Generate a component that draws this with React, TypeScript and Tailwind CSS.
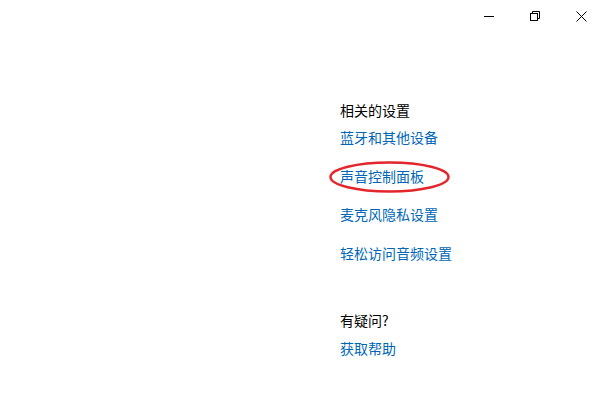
import React from "react";

const font = { fontFamily: '"Noto Sans CJK SC", "Noto Sans", sans-serif' };

export default function App() {
  return (
    <div className="w-[604px] h-[407px] bg-white relative overflow-hidden" style={font}>
      <div className="flex justify-end h-[32px]">
        <div className="w-[46px] h-[32px] flex items-center justify-center">
          <svg width="10" height="10" viewBox="0 0 10 10">
            <line x1="0" y1="5.5" x2="10" y2="5.5" stroke="#000" strokeWidth="1" />
          </svg>
        </div>
        <div className="w-[46px] h-[32px] flex items-center justify-center">
          <svg width="10" height="10" viewBox="0 0 10 10" fill="none" stroke="#000" strokeWidth="1">
            <rect x="0.5" y="2.5" width="7" height="7" />
            <path d="M2.5 2.5 V0.5 H9.5 V7.5 H7.5" />
          </svg>
        </div>
        <div className="w-[46px] h-[32px] flex items-center justify-center">
          <svg width="11" height="11" viewBox="0 0 11 11" stroke="#000" strokeWidth="1">
            <line x1="0.5" y1="0.5" x2="10.5" y2="10.5" />
            <line x1="10.5" y1="0.5" x2="0.5" y2="10.5" />
          </svg>
        </div>
      </div>
      <div className="pl-[340px] pt-[68px] flex flex-col text-[14px] leading-[20px]">
        <div className="text-black">相关的设置</div>
        <div className="mt-[7px] text-[#0067b8]">蓝牙和其他设备</div>
        <div className="mt-[19px] text-[#0067b8] relative w-fit">
          声音控制面板
          <svg
            className="absolute left-[-11px] top-[-5px]"
            width="121"
            height="32"
            viewBox="0 0 121 32"
            fill="none"
          >
            <ellipse cx="60.5" cy="16" rx="59" ry="14.5" stroke="#e3262b" strokeWidth="2.5" />
          </svg>
        </div>
        <div className="mt-[18px] text-[#0067b8]">麦克风隐私设置</div>
        <div className="mt-[19px] text-[#0067b8]">轻松访问音频设置</div>
        <div className="mt-[47px] text-black">有疑问?</div>
        <div className="mt-[8px] text-[#0067b8]">获取帮助</div>
      </div>
    </div>
  );
}
